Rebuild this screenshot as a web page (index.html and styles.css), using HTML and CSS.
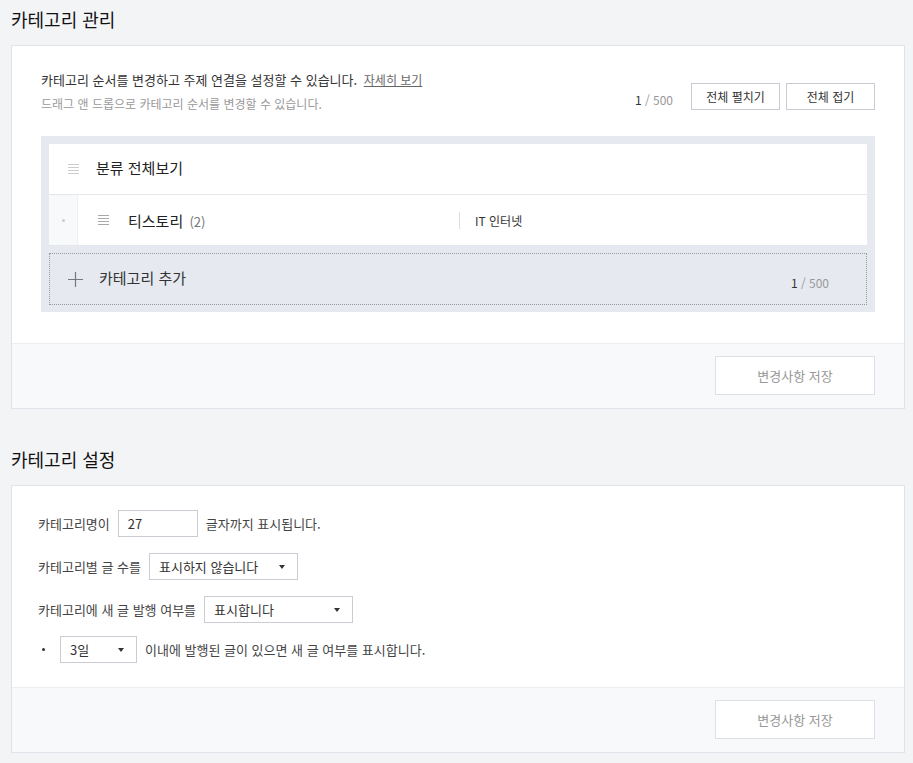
FILE: index.html
```html
<!DOCTYPE html>
<html lang="ko">
<head>
<meta charset="utf-8">
<link rel="stylesheet" href="styles.css">
</head>
<body>
<div class="page">
  <section class="section">
    <h2 class="sec-title">카테고리 관리</h2>
    <div class="card">
      <div class="card-body">
        <div class="desc-row">
          <div class="desc">
            <p class="desc-main">카테고리 순서를 변경하고 주제 연결을 설정할 수 있습니다. <a class="more" href="#">자세히 보기</a></p>
            <p class="desc-sub">드래그 앤 드롭으로 카테고리 순서를 변경할 수 있습니다.</p>
          </div>
          <div class="tools">
            <span class="count"><b>1</b> / 500</span>
            <button class="btn">전체 펼치기</button>
            <button class="btn">전체 접기</button>
          </div>
        </div>
        <div class="list-wrap">
          <div class="list">
            <div class="row row-top">
              <span class="handle light"><i></i><i></i><i></i><i></i></span>
              <span class="row-name">분류 전체보기</span>
            </div>
            <div class="row row-sub">
              <span class="gutter"><span class="dot"></span></span>
              <span class="handle"><i></i><i></i><i></i><i></i></span>
              <span class="row-name cat">티스토리 <em>(2)</em></span>
              <span class="topic">IT 인터넷</span>
            </div>
          </div>
          <div class="add-row">
            <svg class="plus" width="15" height="15" viewBox="0 0 15 15"><path d="M7.5 0v15M0 7.5h15" stroke="#777" stroke-width="1.2" fill="none"/></svg>
            <span class="add-name">카테고리 추가</span>
            <span class="count add-count"><b>1</b> / 500</span>
          </div>
        </div>
      </div>
      <div class="card-foot">
        <button class="save">변경사항 저장</button>
      </div>
    </div>
  </section>

  <section class="section">
    <h2 class="sec-title">카테고리 설정</h2>
    <div class="card">
      <div class="card-body settings">
        <div class="set-row">
          <span>카테고리명이</span>
          <span class="field input">27</span>
          <span>글자까지 표시됩니다.</span>
        </div>
        <div class="set-row">
          <span>카테고리별 글 수를</span>
          <span class="field select w149">표시하지 않습니다<span class="arrow"></span></span>
        </div>
        <div class="set-row">
          <span>카테고리에 새 글 발행 여부를</span>
          <span class="field select w149">표시합니다<span class="arrow"></span></span>
        </div>
        <div class="set-row sub">
          <span class="bullet"></span>
          <span class="field select w77">3일<span class="arrow"></span></span>
          <span>이내에 발행된 글이 있으면 새 글 여부를 표시합니다.</span>
        </div>
      </div>
      <div class="card-foot">
        <button class="save">변경사항 저장</button>
      </div>
    </div>
  </section>
</div>
</body>
</html>
```

FILE: styles.css
```css
* { box-sizing: border-box; }
html, body { margin: 0; padding: 0; }
body {
  background: #f3f4f6;
  font-family: "Noto Sans CJK KR", "Noto Sans", sans-serif;
  color: #333;
  width: 913px;
  height: 763px;
  overflow: hidden;
}
.page { padding: 0 8px 0 11px; }
.section { margin-bottom: 31px; }
.sec-title {
  margin: 0;
  height: 45px;
  padding-top: 5px;
  font-size: 18px;
  line-height: 28px;
  font-weight: 400;
  color: #111;
}
.card {
  background: #fff;
  border: 1px solid #e0e3e9;
}
.card-body { padding: 25px 29px 31px 29px; }
.desc-row { display: flex; justify-content: space-between; }
.desc p { margin: 0; }
.desc-main { font-size: 13px; line-height: 18px; color: #333; }
.more { color: #666; font-size: 12px; text-decoration: underline; margin-left: 3px; }
.desc-sub { font-size: 12px; line-height: 18px; color: #999; margin-top: 6px !important; }
.tools { display: flex; align-items: center; padding-top: 12px; height: 39px; }
.count { font-size: 12px; color: #999; margin-right: 18px; margin-top: 5px; }
.count b { font-weight: 400; color: #333; }
.btn {
  font-family: inherit;
  background: #fff;
  border: 1px solid #c8cbd1;
  height: 27px;
  width: 89px;
  font-size: 12px;
  color: #333;
  padding: 0;
  margin-left: 6px;
}
.btn:first-of-type { margin-left: 0; }
.list-wrap {
  margin-top: 23px;
  background: #e6e9f0;
  padding: 8px 8px 7px 8px;
}
.list { background: #fff; }
.row {
  display: flex;
  align-items: center;
  height: 51px;
  border-bottom: 1px solid #e3e6eb;
}
.handle { display: flex; flex-direction: column; gap: 2px; width: 11px; }
.handle i { display: block; height: 1px; background: #aaa; }
.handle.light i { background: #ccc; }
.row-top .handle { margin-left: 19px; margin-right: 17px; }
.row-top .row-name { margin-top: -3px; }
.row-name { font-size: 15px; color: #222; }
.row-name em { font-style: normal; color: #777; font-size: 13px; margin-left: 2px; }
.gutter {
  width: 29px;
  align-self: stretch;
  background: #f8f9fb;
  border-right: 1px solid #eef0f3;
  display: flex;
  align-items: center;
  justify-content: center;
}
.dot { width: 3px; height: 3px; border-radius: 50%; background: #ccc; }
.row-sub .handle { margin-left: 20px; margin-right: 19px; }
.row-sub .cat { width: 331px; }
.topic {
  border-left: 1px solid #ddd;
  height: 17px;
  line-height: 17px;
  padding-left: 15px;
  font-size: 12px;
  color: #333;
}
.add-row {
  margin-top: 7px;
  height: 52px;
  border: 1px dotted #999;
  display: flex;
  align-items: center;
  padding-left: 18px;
  padding-right: 37px;
}
.plus { margin-right: 16px; }
.add-name { font-size: 15px; color: #333; flex: 1; margin-top: -3px; }
.add-count { margin-right: 0; margin-top: 6px; }
.card-foot {
  background: #f8f9fb;
  border-top: 1px solid #eceef2;
  height: 65px;
  display: flex;
  justify-content: flex-end;
  align-items: flex-start;
  padding: 12px 29px 0 0;
}
.save {
  font-family: inherit;
  width: 160px;
  height: 39px;
  background: #fff;
  border: 1px solid #dde0e6;
  color: #999;
  font-size: 13px;
  padding: 0;
}
.settings { padding: 24px 26px 24px 26px; }
.set-row {
  display: flex;
  align-items: center;
  gap: 8px;
  font-size: 13px;
  color: #444;
  height: 27px;
  margin-bottom: 16px;
}
.set-row.sub { margin-bottom: 0; margin-top: -3px; gap: 8px; }
.field {
  height: 27px;
  border: 1px solid #c9ccd3;
  background: #fff;
  display: flex;
  align-items: center;
  padding-left: 9px;
  color: #333;
  position: relative;
}
.input { width: 80px; }
.w149 { width: 149px; }
.w77 { width: 77px; }
.arrow {
  position: absolute;
  right: 12px;
  top: 11px;
  width: 0; height: 0;
  border-left: 3.5px solid transparent;
  border-right: 3.5px solid transparent;
  border-top: 4px solid #333;
}
.bullet { width: 3px; height: 3px; background: #333; border-radius: 50%; margin-left: 4px; margin-right: 7px; }
```
